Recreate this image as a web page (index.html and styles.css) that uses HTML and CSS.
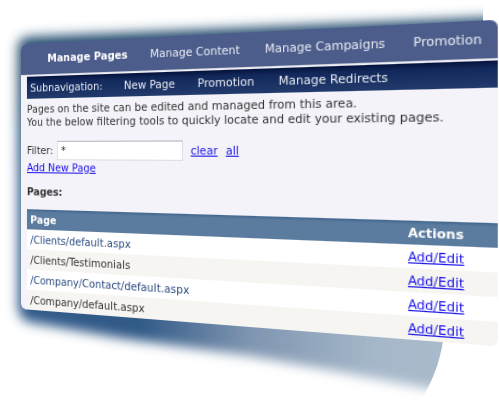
FILE: index.html
```html
<!DOCTYPE html>
<html lang="en">
<head>
<meta charset="utf-8">
<title>Manage Pages</title>
<link rel="stylesheet" href="styles.css">
</head>
<body>
<div class="scene">
  <svg class="shadow" viewBox="0 0 499 403" preserveAspectRatio="none" aria-hidden="true">
    <defs>
      <linearGradient id="tone" x1="0" y1="0" x2="499" y2="0" gradientUnits="userSpaceOnUse">
        <stop offset="0" stop-color="#2f5b8a"/>
        <stop offset=".28" stop-color="#315a87"/>
        <stop offset=".5" stop-color="#7f95b0"/>
        <stop offset=".75" stop-color="#a5b7c9"/>
        <stop offset=".9" stop-color="#a9bacb"/>
      </linearGradient>
      <linearGradient id="top" x1="0" y1="0" x2="0" y2="180" gradientUnits="userSpaceOnUse">
        <stop offset="0" stop-color="#2b5375"/>
        <stop offset=".4" stop-color="#1f4769"/>
        <stop offset="1" stop-color="#2f5b8a"/>
      </linearGradient>
      <filter id="soft" x="-50" y="-50" width="620" height="520" filterUnits="userSpaceOnUse">
        <feGaussianBlur stdDeviation="6"/>
      </filter>
      <clipPath id="edge">
        <path d="M0 0H483V300L443 341Q438 374 419 403H0Z"/>
      </clipPath>
    </defs>
    <g clip-path="url(#edge)">
      <g filter="url(#soft)">
        <path fill="url(#top)" d="M18 48Q18 38 28 37L520 16V180H18Z"/>
        <path fill="url(#tone)" d="M18 179H520V404L420 387L330 370L250 356L120 338L28 322Q18 318 18 306Z"/>
      </g>
    </g>
  </svg>
  <main class="card">
    <nav class="tabs">
      <a class="current" href="#">Manage Pages</a>
      <a href="#">Manage Content</a>
      <a href="#">Manage Campaigns</a>
      <a href="#">Promotion</a>
    </nav>
    <nav class="subnav">
      <span>Subnavigation:</span>
      <a href="#">New Page</a>
      <a href="#">Promotion</a>
      <a href="#">Manage Redirects</a>
    </nav>
    <section class="content">
      <p class="intro">Pages on the site can be edited and managed from this area.<br>You the below filtering tools to quickly locate and edit your existing pages.</p>
      <form class="filter">
        <label for="filter">Filter:</label>
        <input id="filter" type="text" value="*">
        <a href="#">clear</a>
        <a href="#">all</a>
      </form>
      <a class="add" href="#">Add New Page</a>
      <h2>Pages:</h2>
      <table>
        <thead><tr><th>Page</th><th class="actions">Actions</th></tr></thead>
        <tbody>
          <tr><td>/Clients/default.aspx</td><td><a href="#">Add/Edit</a></td></tr>
          <tr><td>/Clients/Testimonials</td><td><a href="#">Add/Edit</a></td></tr>
          <tr><td>/Company/Contact/default.aspx</td><td><a href="#">Add/Edit</a></td></tr>
          <tr><td>/Company/default.aspx</td><td><a href="#">Add/Edit</a></td></tr>
        </tbody>
      </table>
    </section>
  </main>
</div>
</body>
</html>
```
FILE: styles.css
```css
* { box-sizing: border-box; }

body {
  margin: 0;
  background: #fff;
  color: #333;
  font: 11px/13px Verdana, "DejaVu Sans", sans-serif;
}

.scene {
  position: relative;
  min-height: 100vh;
  padding: 44px 0 0 21px;
  overflow: hidden;
}

.shadow {
  position: absolute;
  inset: 0;
  width: 100%;
  height: 100%;
}

/* The panel swings away from the viewer on its left edge. */
.card {
  position: relative;
  width: calc(100vw - 38px);
  overflow: hidden;
  border-radius: 6px;
  background: #f4f3f9;
  transform-origin: 0 104px;
  transform: perspective(1328px) rotateY(-33deg);
}

a { color: #1a12e8; }

.tabs,
.subnav {
  display: flex;
  align-items: center;
}

.tabs {
  gap: 24px;
  height: 32px;
  padding-left: 31px;
  border-bottom: 1px solid #dcdfe8;
  background: #4c5d8b;
}

.subnav {
  gap: 23px;
  height: 22px;
  margin: 1px 0 0 7px;
  padding-left: 4px;
  background: linear-gradient(#04123c, #12285a 25%, #223a6c);
  color: #e8ebf3;
}

.tabs a,
.subnav a {
  color: #e8ebf3;
  text-decoration: none;
  white-space: nowrap;
}

.tabs .current {
  color: #fff;
  font-weight: bold;
}

.content { padding: 4px 0 0 7px; }

.intro { margin: 0 0 12px; white-space: nowrap; }

.filter {
  display: flex;
  align-items: center;
  gap: 8px;
}

.filter label { margin-right: -4px; }

.filter input {
  width: 137px;
  height: 19px;
  padding: 0 4px;
  border: 1px solid #dcdce4;
  border-top-color: #b4b4bc;
  background: #fff;
  color: #333;
  font: inherit;
}

.add { display: inline-block; margin-top: 1px; }

h2 {
  margin: 11px 0;
  font-size: 11px;
  line-height: 13px;
}

table {
  width: 100%;
  border-collapse: collapse;
  background: #fff;
}

th,
td {
  height: 20px;
  padding: 1px 4px 0;
  text-align: left;
}

thead tr {
  background: linear-gradient(#41658d, #5b7b9f 15%, #5b7b9f);
  color: #fff;
}

.actions { width: 77px; }

tbody tr { color: #2b4a80; }

tbody tr:nth-child(even) {
  background: #f6f5f1;
  color: #333;
}
```
